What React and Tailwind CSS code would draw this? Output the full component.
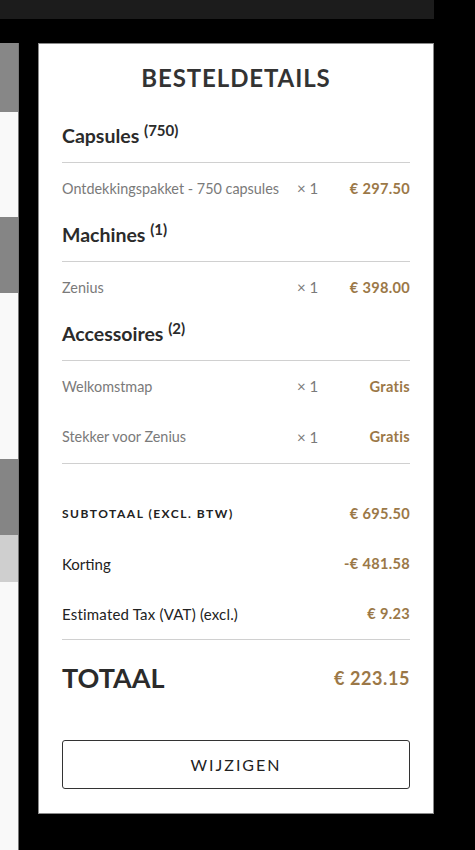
import React from 'react';

const font = { fontFamily: 'Lato, "Noto Sans", sans-serif' };

const sections = [
  { title: 'Capsules', count: 750, items: [{ name: 'Ontdekkingspakket - 750 capsules', qty: 1, price: '€ 297.50' }], first: true },
  { title: 'Machines', count: 1, items: [{ name: 'Zenius', qty: 1, price: '€ 398.00' }] },
  {
    title: 'Accessoires',
    count: 2,
    items: [
      { name: 'Welkomstmap', qty: 1, price: 'Gratis' },
      { name: 'Stekker voor Zenius', qty: 1, price: 'Gratis' },
    ],
  },
];

const ItemRow = ({ item, last }) => (
  <div className={`flex items-center ${last ? 'h-[52px] border-b border-[#d0d0d0] pb-[1px]' : 'h-[51px]'}`}>
    <span className="flex-1 text-[14.4px] text-[#7a7a7a]">{item.name}</span>
    <span className="w-[22px] text-[15px] text-[#7a7a7a]">× {item.qty}</span>
    <span className="w-[91px] text-right text-[14.6px] font-bold tracking-[0.3px] text-[#9b7847]">{item.price}</span>
  </div>
);

const Section = ({ section, isLast }) => (
  <div>
    <div className={`border-b border-[#d0d0d0] pb-3 ${section.first ? 'pt-[30px]' : 'pt-[7px]'}`}>
      <h3 className="text-[19.5px] font-bold leading-[28px] text-[#2b2b2b]">
        {section.title} <sup className="text-[15px]">({section.count})</sup>
      </h3>
    </div>
    {section.items.map((item, i) => (
      <ItemRow key={item.name} item={item} last={isLast && i === section.items.length - 1} />
    ))}
  </div>
);

const OrderDetails = () => (
  <div className="flex w-[396px] flex-col border border-[#8a8a8a] bg-white px-[23px] pt-5 pb-6">
    <h2 className="text-center text-[24px] font-bold leading-[28px] tracking-[0.9px] text-[#333]">BESTELDETAILS</h2>
    {sections.map((s, i) => (
      <Section key={s.title} section={s} isLast={i === sections.length - 1} />
    ))}
    <div className="border-b border-[#d0d0d0] pt-[25px]">
      <div className="flex h-[50px] items-center justify-between">
        <span className="text-[12px] font-bold tracking-[1.5px] text-[#222]">SUBTOTAAL (EXCL. BTW)</span>
        <span className="text-[14.6px] font-bold tracking-[0.3px] text-[#9b7847]">€ 695.50</span>
      </div>
      <div className="flex h-[50px] items-center justify-between">
        <span className="text-[15px] text-[#222]">Korting</span>
        <span className="text-[14.6px] font-bold tracking-[0.3px] text-[#9b7847]">-€ 481.58</span>
      </div>
      <div className="flex h-[50px] items-center justify-between">
        <span className="text-[15px] tracking-[0.2px] text-[#222]">Estimated Tax (VAT) (excl.)</span>
        <span className="text-[14.6px] font-bold tracking-[0.3px] text-[#9b7847]">€ 9.23</span>
      </div>
    </div>
    <div className="flex h-[76px] items-center justify-between">
      <span className="text-[27px] font-bold text-[#2b2b2b]">TOTAAL</span>
      <span className="text-[18px] font-bold tracking-[0.6px] text-[#9b7847]">€ 223.15</span>
    </div>
    <button className="mt-6 h-[49px] rounded-[3px] border-[1.5px] border-[#333] bg-white text-[16px] tracking-[2px] text-[#222]">
      WIJZIGEN
    </button>
  </div>
);

export default function App() {
  return (
    <div className="relative h-[850px] w-[475px] overflow-hidden bg-black" style={font}>
      <div className="h-[19px] w-[434px] bg-[#1c1c1c]" />
      <div className="flex">
        {/* page behind the overlay, left edge */}
        <div className="mt-6 flex h-[807px] w-[19px] flex-col border-r border-[#777]">
          <div className="h-[69px] bg-[#878787]" />
          <div className="h-[105px] bg-[#f9f9f9]" />
          <div className="h-[76px] bg-[#858585]" />
          <div className="h-[166px] bg-[#f9f9f9]" />
          <div className="h-[76px] bg-[#858585]" />
          <div className="h-[47px] bg-[#cfcfcf]" />
          <div className="flex-1 bg-[#f9f9f9]" />
        </div>
        <div className="ml-[19px] mt-6">
          <OrderDetails />
        </div>
      </div>
    </div>
  );
}
